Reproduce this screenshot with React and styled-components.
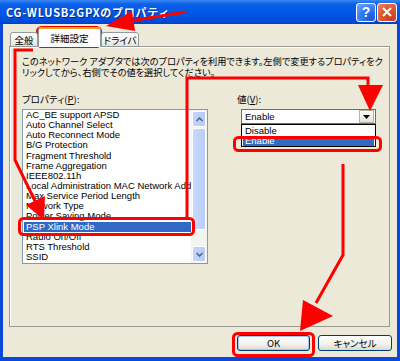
import React from "react"
import styled, { createGlobalStyle } from "styled-components"

const JP = `"Noto Sans CJK JP", "Liberation Sans", sans-serif`
const UI = `"Liberation Sans", "Noto Sans CJK JP", sans-serif`

const GlobalStyle = createGlobalStyle`
	html, body { margin: 0; padding: 0; background: #fff; }
	body { font-family: ${JP}; }
`

const PROPS = [
	"AC_BE support APSD",
	"Auto Channel Select",
	"Auto Reconnect Mode",
	"B/G Protection",
	"Fragment Threshold",
	"Frame Aggregation",
	"IEEE802.11h",
	"Local Administration MAC Network Address",
	"Max Service Period Length",
	"Network Type",
	"Power Saving Mode",
	"PSP Xlink Mode",
	"Radio On/Off",
	"RTS Threshold",
	"SSID",
]

const Window = styled.div`
	position: relative;
	width: 400px;
	height: 361px;
	display: flex;
	flex-direction: column;
	overflow: hidden;
`

const TitleBar = styled.div`
	height: 24px;
	flex: none;
	display: flex;
	align-items: center;
	padding: 0 3px 0 6px;
	background: linear-gradient(#3A86F4, #0B60E9 18%, #0057E6 55%, #004BD8 90%, #0040C4);
`

const Title = styled.div`
	flex: 1;
	color: #fff;
	font: bold 11px ${JP};
	letter-spacing: 0.75px;
	text-shadow: 1px 1px 0 #0A2A90;
	white-space: nowrap;
`

const CapButton = styled.div`
	width: 18px;
	height: 17px;
	margin-left: 1px;
	border: 1px solid #fff;
	border-radius: 3px;
	display: flex;
	align-items: center;
	justify-content: center;
	color: #fff;
	font: bold 14px ${UI};
	background: ${p =>
		p.$close
			? "radial-gradient(circle at 75% 85%, #C8401C, #DE5A32 55%, #EE8766)"
			: "radial-gradient(circle at 75% 85%, #1A58D8, #3A7EF2 55%, #7AAAF8)"};
`

const Frame = styled.div`
	flex: 1;
	display: flex;
	flex-direction: column;
	background: #ECE9D8;
	border: solid #0A48DA;
	border-width: 0 3px 4px 3px;
	padding: 4px 7px 0 6px;
`

const TabStrip = styled.div`
	height: 19px;
	display: flex;
	align-items: flex-end;
	padding-left: 1px;
	position: relative;
	z-index: 1;
	margin-bottom: -1px;
`

const Tab = styled.div`
	width: ${p => p.$w}px;
	height: ${p => (p.$active ? 20 : 15)}px;
	box-sizing: border-box;
	display: flex;
	align-items: center;
	justify-content: center;
	font: 9.5px ${JP};
	font-feature-settings: "palt";
	white-space: nowrap;
	overflow: hidden;
	color: #000;
	border: 1px solid #919B9C;
	border-bottom: ${p => (p.$active ? "none" : "1px solid #919B9C")};
	border-top: ${p => (p.$active ? "2px solid #F5A623" : "1px solid #919B9C")};
	border-radius: 3px 3px 0 0;
	background: ${p => (p.$active ? "#FCFCFE" : "linear-gradient(#FFFFFF, #F0EFEA 70%, #E4E2D8)")};
	padding-top: ${p => (p.$active ? 0 : 1)}px;
`

const Panel = styled.div`
	height: 281px;
	flex: none;
	box-sizing: border-box;
	border: 1px solid #9A9A94;
	box-shadow: inset 1px 1px 0 #fff;
	background: #ECE9D8;
	padding: 9px 0 0 12px;
`

const Description = styled.div`
	font: 9.2px/10.5px ${JP};
	font-feature-settings: "palt";
	color: #000;
	white-space: nowrap;
`

const Columns = styled.div`
	margin-top: 17px;
	display: grid;
	grid-template-columns: 186px 139px;
	column-gap: 29px;
	align-items: start;
`

const Column = styled.div`
	display: flex;
	flex-direction: column;
`

const Label = styled.div`
	font: 9.5px/10px ${JP};
	font-feature-settings: "palt";
	color: #000;
	height: 10px;
	margin-bottom: 5px;
	u { text-decoration: underline; }
`

const ListBox = styled.div`
	height: 155px;
	box-sizing: border-box;
	border: 1px solid #7F9DB9;
	background: #fff;
	display: flex;
`

const Items = styled.div`
	flex: 1;
	min-width: 0;
	overflow: hidden;
`

const Item = styled.div`
	height: 10.15px;
	font: 9.5px/10.15px ${UI};
	margin-left: ${p => (p.$selected ? 1 : 0)}px;
	padding-left: ${p => (p.$selected ? 2 : 3)}px;
	white-space: nowrap;
	overflow: hidden;
	color: ${p => (p.$selected ? "#fff" : "#000")};
	background: ${p => (p.$selected ? "#316AC5" : "transparent")};
`

const ScrollBar = styled.div`
	width: 16px;
	flex: none;
	display: flex;
	flex-direction: column;
	background: #F3F3EF;
	padding: 1px 0;
	box-sizing: border-box;
`

const ScrollButton = styled.div`
	height: 14px;
	flex: none;
	margin: 0 1px;
	border: 1px solid #fff;
	border-radius: 2px;
	background: linear-gradient(90deg, #C5D5FC, #B6CAF8);
	display: flex;
	align-items: center;
	justify-content: center;
`

const Thumb = styled.div`
	flex: 1;
	margin: 1px 1px 16px;
	border: 1px solid #fff;
	border-radius: 2px;
	background: linear-gradient(90deg, #CAD9FD, #B9CDF9);
`

const Combo = styled.div`
	margin-left: 4px;
	width: 135px;
	height: 15px;
	box-sizing: border-box;
	border: 1px solid #5F6F86;
	background: #fff;
	display: flex;
	align-items: center;
	font: 9.5px ${UI};
	padding-left: 3px;
`

const DropButton = styled.div`
	margin-left: auto;
	margin-right: 1px;
	width: 13px;
	height: 11px;
	border: 1px solid #B8B4A4;
	background: linear-gradient(#FDFDFB, #E6E3D6);
	display: flex;
	align-items: center;
	justify-content: center;
`

const DropList = styled.div`
	margin-left: 4px;
	width: 135px;
	height: 23px;
	box-sizing: border-box;
	border: 1px solid #000;
	background: #fff;
	padding: 1px 0 0 1px;
`

const Option = styled.div`
	height: 10px;
	font: 9.5px/10px ${UI};
	padding-left: 2px;
	margin-right: 1px;
	color: ${p => (p.$selected ? "#fff" : "#000")};
	background: ${p => (p.$selected ? "#316AC5" : "transparent")};
`

const Footer = styled.div`
	display: flex;
	justify-content: flex-end;
	gap: 8px;
	margin: 8px -2px 0 0;
`

const Button = styled.div`
	width: ${p => p.$w}px;
	height: 16px;
	box-sizing: border-box;
	border: 1px solid #003C74;
	border-radius: 3px;
	background: linear-gradient(#FFFFFF, #F2F1EC 60%, #DCD8CA);
	box-shadow: ${p => (p.$default ? "inset 0 0 0 1px #A8C4F0" : "none")};
	display: flex;
	align-items: center;
	justify-content: center;
	font: 9.5px ${JP};
	font-feature-settings: "palt";
	color: #000;
`

const Annotations = styled.svg`
	position: absolute;
	left: 0;
	top: 0;
	pointer-events: none;
`

const RED = "#FF0000"

const Overlay = () => (
	<Annotations width="400" height="361" viewBox="0 0 400 361">
		{/* arrow to the tab */}
		<line x1="185" y1="12" x2="130" y2="21" stroke={RED} strokeWidth="3" />
		<polygon points="106,26 135,31 132,11" fill={RED} />
		<rect x="37.5" y="27.5" width="63" height="19" rx="4" fill="none" stroke={RED} strokeWidth="3" />
		{/* tab to property list */}
		<polyline points="33,50 15,50 15,160 36,203" fill="none" stroke={RED} strokeWidth="3" />
		<polygon points="44,220 26,205 45,196" fill={RED} />
		<rect x="19.5" y="218.5" width="174" height="16" rx="4" fill="none" stroke={RED} strokeWidth="3" />
		{/* property to value */}
		<polyline points="187,217 187,78 368,78 368,88" fill="none" stroke={RED} strokeWidth="3" />
		<polygon points="358,85 383,85 370,111" fill={RED} />
		<rect x="234.5" y="137.5" width="146" height="13" rx="4" fill="none" stroke={RED} strokeWidth="3" />
		{/* value to OK */}
		<polyline points="343,164 343,255 316,303" fill="none" stroke={RED} strokeWidth="3" />
		<polygon points="300,331 303,300 333,316" fill={RED} />
		<rect x="233.5" y="333.5" width="80" height="22" rx="4" fill="none" stroke={RED} strokeWidth="3" />
	</Annotations>
)

export default function App() {
	return (
		<>
			<GlobalStyle />
			<Window>
				<TitleBar>
					<Title>CG-WLUSB2GPXのプロパティ</Title>
					<CapButton>?</CapButton>
					<CapButton $close>
						<svg width="10" height="10" viewBox="0 0 10 10">
							<path d="M1 1 L9 9 M9 1 L1 9" stroke="#fff" strokeWidth="2" />
						</svg>
					</CapButton>
				</TitleBar>
				<Frame>
					<TabStrip>
						<Tab $w={28}>全般</Tab>
						<Tab $w={63} $active>詳細設定</Tab>
						<Tab $w={38}>ドライバ</Tab>
					</TabStrip>
					<Panel>
						<Description>
							このネットワーク アダプタでは次のプロパティを利用できます。左側で変更するプロパティをク
							<br />
							リックしてから、右側でその値を選択してください。
						</Description>
						<Columns>
							<Column>
								<Label>
									プロパティ(<u>P</u>):
								</Label>
								<ListBox>
									<Items>
										{PROPS.map(name => (
											<Item key={name} $selected={name === "PSP Xlink Mode"}>
												{name}
											</Item>
										))}
									</Items>
									<ScrollBar>
										<ScrollButton>
											<svg width="7" height="5" viewBox="0 0 7 5">
												<path d="M0.5 4 L3.5 1 L6.5 4" fill="none" stroke="#4D6185" strokeWidth="1.5" />
											</svg>
										</ScrollButton>
										<Thumb />
										<ScrollButton>
											<svg width="7" height="5" viewBox="0 0 7 5">
												<path d="M0.5 1 L3.5 4 L6.5 1" fill="none" stroke="#4D6185" strokeWidth="1.5" />
											</svg>
										</ScrollButton>
									</ScrollBar>
								</ListBox>
							</Column>
							<Column>
								<Label>
									値(<u>V</u>):
								</Label>
								<Combo>
									Enable
									<DropButton>
										<svg width="7" height="4" viewBox="0 0 7 4">
											<path d="M0 0 L7 0 L3.5 4 Z" fill="#000" />
										</svg>
									</DropButton>
								</Combo>
								<DropList>
									<Option>Disable</Option>
									<Option $selected>Enable</Option>
								</DropList>
							</Column>
						</Columns>
					</Panel>
					<Footer>
						<Button $w={73} $default>OK</Button>
						<Button $w={74}>キャンセル</Button>
					</Footer>
				</Frame>
				<Overlay />
			</Window>
		</>
	)
}
